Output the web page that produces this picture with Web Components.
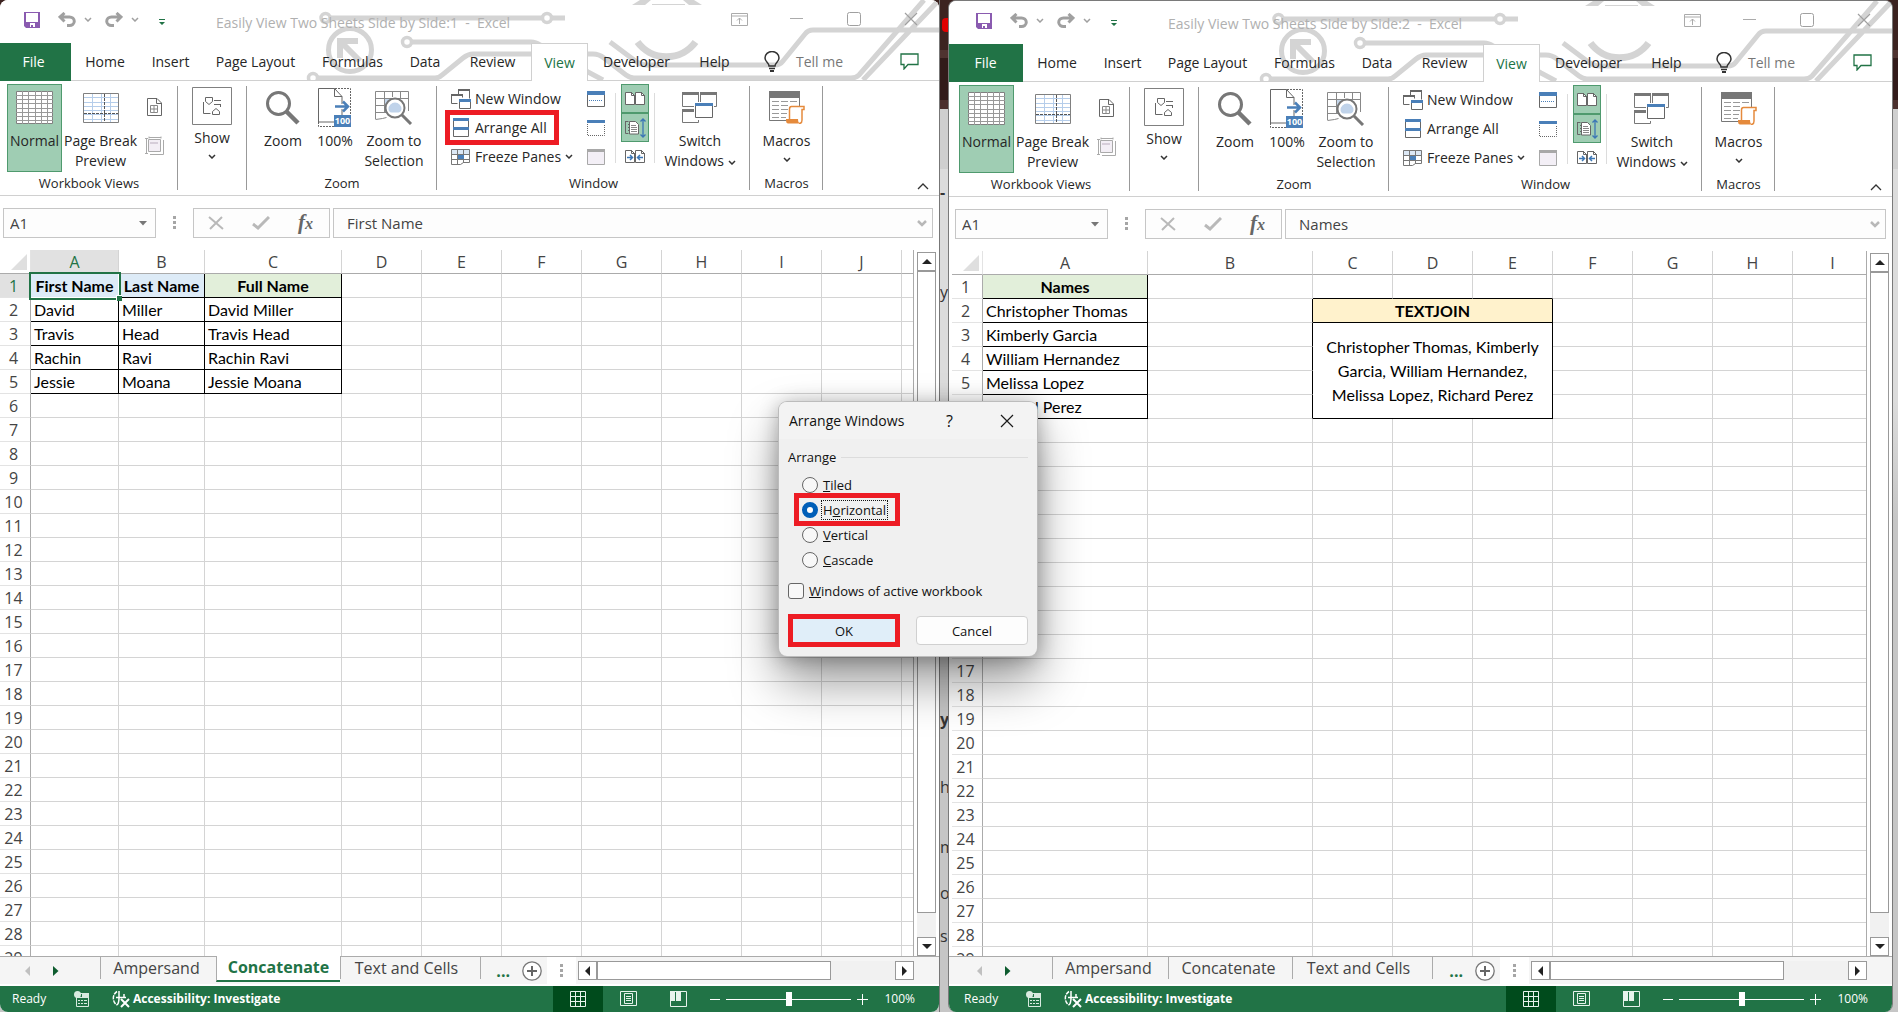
<!DOCTYPE html>
<html lang="en">
<head>
<meta charset="utf-8">
<title>Easily View Two Sheets Side by Side - Excel</title>
<style>
    html, body {
        margin: 0;
        height: 100%;
    }
    body {
        overflow: hidden;
        font-family: "Open Sans", "Noto Sans", sans-serif;
        font-size: 14px;
        color: #262626;
        background: #d2d2d2;
    }
</style>
</head>
<body>
<side-by-side>
    <excel-window slot="first" book="1"></excel-window>
    <excel-window slot="second" book="2"></excel-window>
    <arrange-dialog slot="dialog"></arrange-dialog>
</side-by-side>

<script>
// evenly spaced inner lines of a table-like icon
function rules(x, y, w, h, cols, rows, color) {
    let d = '';
    for (let i = 1; i < cols; i++) {
        d += `M${Math.round(x + i * w / cols) + 0.5} ${y}v${h}`;
    }
    for (let i = 1; i < rows; i++) {
        d += `M${x} ${Math.round(y + i * h / rows) + 0.5}h${w}`;
    }
    return `<path d="${d}" stroke="${color}" fill="none"/>`;
}

const PAGE = (x, y) => `<path d="M${x + 0.5} ${y + 0.5}h6l3 3v9h-9z" fill="#fff" stroke="#666"/><path d="M${x + 6.5} ${y}v3.5h3.5" fill="none" stroke="#666"/>`;

// name: [width, height, markup]
const ICONS = {
    save: [16, 16, `<path d="M0 0h16v16H2l-2-2z" fill="#8a5bb0"/><path d="M2 1h12v9H2zM4 11h8v4H4z" fill="#fff"/><path d="M4 11h2v4H4zM7 13h2v2H7zM11 11h1v4h-1z" fill="#8a5bb0"/>`],
    undo: [18, 15, `<path d="M3 5h8.500a4.500 4 0 0 1 0 8.500H9M6.500 1L2 5l4.500 4.500" fill="none" stroke="#a0a0a0" stroke-width="3"/>`],
    redo: [18, 15, `<path d="M15 5H6.500a4.500 4 0 0 0 0 8.500H9M11.500 1L16 5l-4.500 4.500" fill="none" stroke="#a0a0a0" stroke-width="3"/>`],
    chevronPale: [8, 5, `<path d="M1 1l3 3 3-3" fill="none" stroke="#a0a0a0" stroke-width="1.500"/>`],
    chevron: [8, 5, `<path d="M1 1l3 3 3-3" fill="none" stroke="#333" stroke-width="1.500"/>`],
    chevronBar: [10, 7, `<path d="M1 1l4 4 4-4" fill="none" stroke="#b8b8b8" stroke-width="2.500"/>`],
    collapse: [12, 7, `<path d="M1 6l5-5 5 5" fill="none" stroke="#333" stroke-width="1.300"/>`],
    customize: [6, 6, `<path d="M0 0h6v1H0zM0 3h6L3 6z" fill="#217346"/>`],
    display: [17, 13, `<path d="M.5.500h16v12H.5zM0 3h17M8.500 11V5M6 7.500L8.500 5 11 7.500" fill="none" stroke="#ababab"/>`],
    minimize: [13, 14, `<path d="M0 6.500h13" stroke="#ababab"/>`],
    maximize: [14, 14, `<rect x=".5" y=".5" width="13" height="13" rx="2" fill="none" stroke="#a0a0a0"/>`],
    close: [14, 14, `<path d="M1 1l12 12M13 1L1 13" stroke="#a0a0a0" stroke-width="1.200"/>`],
    closeDark: [14, 14, `<path d="M1 1l12 12M13 1L1 13" stroke="#1a1a1a" stroke-width="1.200"/>`],
    bulb: [16, 21, `<path d="M5 15c0-3-4-4-4-8a7 6.500 0 0 1 14 0c0 4-4 5-4 8zM5 17.500h6" fill="none" stroke="#333" stroke-width="1.500"/><path d="M6 20h4" stroke="#333" stroke-width="2"/>`],
    comment: [19, 17, `<path d="M1 1h17v10.500H8L4 16v-4.500H1z" fill="none" stroke="#217346" stroke-width="1.300"/>`],
    normal: [37, 33, `<path d="M.5.500h36v32H.5z" fill="#fff" stroke="#808080"/>${rules(0, 0, 37, 33, 6, 8, '#999')}`],
    pageBreak: [36, 30, `<path d="M.5.500h35v29H.5z" fill="#fff"/>${rules(0, 0, 36, 30, 4, 7, '#b5cdea')}<path d="M.5.500h35v29H.5z" fill="none" stroke="#808080"/><path d="M21.500 1v28M1 20.500h34" stroke="#555" stroke-dasharray="3 1"/>`],
    pageLayout: [15, 18, `<path d="M.5.500h9.500l4.500 4.500v12.500H.5zM9.500.500V5.500h5" fill="#fff" stroke="#666"/><path d="M3.500 7.500h7v7h-7zM7 7v8M3 11h8" fill="none" stroke="#888"/>`],
    customViews: [20, 19, `<path d="M4.500 3.500h12v12h-12z" fill="#f3eef5" stroke="#aaa"/><path d="M6 6h8v2H6z" fill="#d6cdd9"/><path d="M2.500 2v15M1 2.500h3M1 17.500h3M5 .5v2M17 .5v2M5 1.500h12M19.500 4v14.500H6" fill="none" stroke="#aaa"/>`],
    show: [40, 38, `<path d="M.5.500h39v37H.5z" fill="#fff" stroke="#808080"/><path d="M13.500 10.500h7v4l-3.500 3-3.500-3zM22 13.500h7M11.500 15v11.500h7M22 17.500h7M28.500 17v3" fill="none" stroke="#666"/><path d="M20.500 27.500v-3l3.500-3 3.500 3v3z" fill="#fff" stroke="#666"/>`],
    zoom: [34, 34, `<circle cx="12.500" cy="12.500" r="11" fill="#fff" stroke="#777" stroke-width="3"/><path d="M20.500 20.500L32 32" stroke="#777" stroke-width="4.500"/>`],
    hundred: [34, 39, `<path d="M17 .5h15.500V27M.5 34v4.500H16" fill="none" stroke="#666" stroke-dasharray="2 1"/><path d="M.5.500h16l7.500 8v25.500H.5z" fill="#fff" stroke="#666"/><path d="M16.500.500v8H24" fill="none" stroke="#666"/><path d="M16 16h16v5H16z" fill="#fff"/><path d="M17 18.500h13M25 13.500l5 5-5 5" fill="none" stroke="#4a7fb8" stroke-width="2.500"/><path d="M16 27h17v12H16z" fill="#4a7fb8"/><text x="24.500" y="36" fill="#fff" font-size="9" font-weight="700" text-anchor="middle">100</text>`],
    zoomSelection: [38, 34, `<path d="M.5.500h33v27H.5z" fill="#fff"/><path d="M9 7h17v14H9z" fill="#c5d7ec"/><path d="M.5 28V.5h33V20M9.500 0v22M17.500 0v6M25.500 0v8M0 7.500h34M0 14.500h11M0 21.500h11M.5 28.500l7-1 4-1" fill="none" stroke="#888"/><circle cx="20" cy="17" r="9.500" fill="#fff" stroke="#777" stroke-width="2"/><path d="M13.500 18a6.500 6.500 0 0 1 13 0c0 2-2 3.500-3 3.500h-7c-2 0-3-2-3-3.500z" fill="#c0d3ea"/><path d="M27 24l9 9" stroke="#777" stroke-width="3"/>`],
    newWindow: [20, 20, `<path d="M7.500 5V.5h11V9.500M.5 5.500h11v3M.5 5.500v9h6" fill="none" stroke="#666"/><path d="M7 0h12v2H7zM0 5h12v2H0z" fill="#666"/><path d="M8.500 11.500h11v8h-11z" fill="#fff" stroke="#666"/><path d="M8 10h12v3H8z" fill="#4a7fb8"/>`],
    arrange: [16, 19, `<path d="M.5.500h15v18H.5z" fill="#fff" stroke="#666"/><path d="M0 0h16v3H0zM0 9h16v3H0z" fill="#4a7fb8"/>`],
    freeze: [20, 16, `<path d="M.5.500h18v13l-3 1-3-1-2 2H.5z" fill="#fff"/><path d="M0 0h19v5H0z" fill="#dce8f5"/><path d="M.5 15.500V.5h18v13l-6 0-3 2zM6.500 0v15M12.500 0v14M0 5.500h19M0 10.500h19" fill="none" stroke="#777"/><path d="M7 6h6v4H7z" fill="#4a7fb8"/>`],
    split: [18, 16, `<path d="M.5.500h17v15H.5z" fill="#fff" stroke="#666"/><path d="M0 0h18v4H0z" fill="#4a7fb8"/><path d="M2 9.500h14" stroke="#4a7fb8" stroke-dasharray="1 1"/>`],
    hide: [18, 16, `<path d="M.5 4v11.500h17V4" fill="none" stroke="#666" stroke-dasharray="1 1"/><path d="M0 0h18v3H0z" fill="#4a7fb8"/>`],
    unhide: [18, 16, `<path d="M.5.500h17v15H.5z" fill="#f3eff6" stroke="#a8a8a8"/><path d="M0 0h18v3H0z" fill="#a8a8a8"/>`],
    sideBySide: [20, 15, PAGE(0, 1) + PAGE(10, 1)],
    syncScroll: [21, 20, `<path d="M.5 3.500h3M.5 3v12.500h3M3 6.500h1M3 9.500h1M3 12.500h1" fill="none" stroke="#666"/><path d="M4.500 3.500h6l3 3v9.500h-9z" fill="#fff" stroke="#666"/><path d="M6 7.500h5M6 9.500h6M6 11.500h6M6 13.500h6" stroke="#888"/><path d="M18 1v18M15.500 3.500L18 1l2.500 2.500M15.500 16.500L18 19l2.500-2.500" fill="none" stroke="#3b76b5" stroke-width="1.300"/>`],
    resetWindow: [20, 15, PAGE(0, 1) + PAGE(10, 1) + `<path d="M2 8.500h5M5 6l2.500 2.500L5 11M18 8.500h-5M15 6l-2.500 2.500L15 11" fill="none" stroke="#3b76b5" stroke-width="1.500"/>`],
    switchWindows: [36, 32, `<path d="M.5.500h16v14H.5zM18.500.500h16v14h-16zM.5 17.500h16v13H.5z" fill="#fff" stroke="#777"/><path d="M0 0h17v3H0zM18 0h17v3H18zM0 17h12v3H0z" fill="#777"/><path d="M12 10h20v18H12z" fill="#fff"/><path d="M13.500 11.500h17v14h-17z" fill="#fff" stroke="#666"/><path d="M13 11h18v3H13z" fill="#4a7fb8"/>`],
    macros: [36, 33, `<path d="M.5.500h30v29H.5z" fill="#fff" stroke="#777"/><path d="M0 0h31v7H0z" fill="#777"/><path d="M3 10.500h7M12 10.500h7M21 10.500h7M3 14.500h7M12 14.500h7M3 18.500h7M12 18.500h7M3 22.500h7M12 22.500h6M3 26.500h7M12 26.500h5" stroke="#999"/><path d="M21 16h14v3h-2v14H21z" fill="#fff"/><path d="M20.500 28V18c0-2 1-2.500 2-2.500h12.500v3h-2V29c0 3-2 3.500-3 3.500" fill="#fff" stroke="#e58a3c" stroke-width="1.500"/><path d="M17 28h12c0 3 1 4 2 4.500H19c-2 0-2-3-2-4.500z" fill="#e58a3c"/>`],
    cancel: [16, 14, `<path d="M1 1l14 12M14 1L2 13" stroke="#b9b9b9" stroke-width="2"/>`],
    enter: [18, 14, `<path d="M1 8l5 4L17 1" fill="none" stroke="#b9b9b9" stroke-width="3"/>`],
    drop: [8, 5, `<path d="M0 0h8L4 4.500z" fill="#777"/>`],
    grip: [3, 14, `<path d="M0 0h3v3H0zM0 5h3v3H0zM0 10h3v3H0z" fill="#a6a6a6"/>`],
    up: [10, 5, `<path d="M0 5h10L5 0z" fill="#222"/>`],
    down: [10, 5, `<path d="M0 0h10L5 5z" fill="#222"/>`],
    left: [5, 10, `<path d="M5 0v10L0 5z" fill="#222"/>`],
    right: [5, 10, `<path d="M0 0v10l5-5z" fill="#222"/>`],
    prevSheet: [5, 10, `<path d="M5 0v10L0 5z" fill="#c0c0c0"/>`],
    nextSheet: [6, 10, `<path d="M0 0v10l5.500-5z" fill="#0e5c2f"/>`],
    addSheet: [20, 20, `<circle cx="10" cy="10" r="9.200" fill="#fff" stroke="#777" stroke-width="1.300"/><path d="M5 10h10M10 5v10" stroke="#666" stroke-width="2"/>`],
    record: [15, 16, `<path d="M2.500 2.500h12v13h-12zM2 6.500h13" fill="none" stroke="#d8ebe0"/><path d="M4 9.500h2M7 9.500h2M10 9.500h3M4 12.500h2M7 12.500h2M10 12.500h3" stroke="#d8ebe0"/><path d="M8 2h7v4H8z" fill="#d8ebe0"/><circle cx="3.500" cy="3.500" r="3.500" fill="#d8ebe0"/>`],
    access: [19, 18, `<path d="M6 1.500A8 8 0 0 0 6 15" fill="none" stroke="#fff" stroke-width="1.500" stroke-dasharray="4 1"/><path d="M8 1v6M5 7.500h10M13 4v3.500M8 8c0 3 0 5-2 7" fill="none" stroke="#fff" stroke-width="1.500"/><path d="M10 9l8 8M18 9l-8 8" stroke="#fff" stroke-width="2"/>`],
    viewNormal: [17, 17, `<path d="M.5.500h15v15H.5zM5.500 0v16M10.500 0v16M0 5.500h16M0 10.500h16" fill="none" stroke="#e7f3ec"/>`],
    viewLayout: [17, 16, `<path d="M.5.500h16v14H.5zM4.500 2.500h8v10h-8zM6 5.500h5M6 7.500h5M6 9.500h5" fill="none" stroke="#e7f3ec"/>`],
    viewBreak: [17, 16, `<path d="M.5.500h16v15H.5z" fill="none" stroke="#e7f3ec"/><path d="M0 0h5v10H0zM6 0h5v10H6z" fill="#e7f3ec"/>`],
    minus: [11, 11, `<path d="M0 5.500h10" stroke="#fff"/>`],
    plus: [11, 11, `<path d="M0 5.500h11M5.500 0v11" stroke="#fff"/>`],
    corner: [16, 16, `<path d="M16 0v16H0z" fill="#dfdfdf"/>`]
};

const BOOKS = {
    1: {
        active: true,
        value: 'First Name',
        columns: [88, 86, 137, 80, 80, 80, 80, 80, 80, 80, 80],
        sheet: 'Concatenate',
        cells: {
            A1: ['First Name', 'data head blue current'], B1: ['Last Name', 'data head blue'], C1: ['Full Name', 'data head green'],
            A2: ['David', 'data'], B2: ['Miller', 'data'], C2: ['David Miller', 'data'],
            A3: ['Travis', 'data'], B3: ['Head', 'data'], C3: ['Travis Head', 'data'],
            A4: ['Rachin', 'data'], B4: ['Ravi', 'data'], C4: ['Rachin Ravi', 'data'],
            A5: ['Jessie', 'data'], B5: ['Moana', 'data'], C5: ['Jessie Moana', 'data']
        }
    },
    2: {
        active: false,
        value: 'Names',
        columns: [165, 165, 80, 80, 80, 80, 80, 80, 80],
        sheet: '',
        cells: {
            A1: ['Names', 'data head green'],
            A2: ['Christopher Thomas', 'data'],
            A3: ['Kimberly Garcia', 'data'],
            A4: ['William Hernandez', 'data'],
            A5: ['Melissa Lopez', 'data'],
            A6: ['Richard Perez', 'data'],
            B2: ['', 'edge-right'], B3: ['', 'edge-right'], B4: ['', 'edge-right'], B5: ['', 'edge-right'], B6: ['', 'edge-right'],
            C1: ['', 'edge-bottom'], D1: ['', 'edge-bottom'], E1: ['', 'edge-bottom'],
            C2: ['TEXTJOIN', 'data head yellow', 3, 1],
            C3: ['Christopher Thomas, Kimberly Garcia, William Hernandez, Melissa Lopez, Richard Perez', 'data wrap', 3, 4]
        }
    }
};

const RESET = `
    :host, *, *::before { box-sizing: border-box; }
    button, input {
        margin: 0;
        padding: 0;
        border: 0;
        background: none;
        font: inherit;
        color: inherit;
    }
`;

class XlIcon extends HTMLElement {
    constructor() {
        super();
        this.attachShadow({mode: 'open'});
    }

    connectedCallback() {
        const [w, h, markup] = ICONS[this.getAttribute('name')];
        this.shadowRoot.innerHTML = `
            <style>
                :host { display: block; flex: none; }
                svg { display: block; }
            </style>
            <svg width="${w}" height="${h}" viewBox="0 0 ${w} ${h}" aria-hidden="true">${markup}</svg>
        `;
    }
}

class WindowHeader extends HTMLElement {
    constructor() {
        super();
        this.attachShadow({mode: 'open'});
    }

    connectedCallback() {
        const tabs = ['Home', 'Insert', 'Page Layout', 'Formulas', 'Data', 'Review', 'View', 'Developer', 'Help'];
        this.shadowRoot.innerHTML = `
            <style>
                ${RESET}
                :host { display: block; position: relative; background: #fff; }
                /* circuit pattern behind the caption and the tabs */
                .art { position: absolute; top: 0; right: 0; }
                .title, nav { position: relative; display: flex; align-items: center; padding-left: var(--edge); }
                .title { height: 43px; }
                .quick { display: flex; align-items: center; width: 216px; padding: 0 0 4px 24px; }
                .quick .undo { margin: 0 8px 0 18px; }
                .quick .redo { margin: 0 8px 0 13px; }
                .quick .custom { margin: 4px 0 0 20px; }
                h1 { flex: 1; margin: 0; padding-top: 2px; font-size: 14px; line-height: 20px; font-weight: 400; color: #b0b0b0; white-space: pre; overflow: hidden; }
                .caption button { display: grid; place-items: center; width: 57px; height: 38px; }
                .caption { display: flex; align-self: flex-start; }
                nav { height: 38px; border-bottom: 1px solid #d0d0d0; align-items: stretch; }
                .tabs { display: grid; grid-template-columns: 71px 68px 63px 107px 87px 58px 77px 57px 97px 59px; }
                .tabs button { white-space: nowrap; text-align: center; line-height: 36px; }
                .tabs .file { margin-left: calc(var(--edge) * -1); padding: 0 4px 0 var(--edge); background: #217346; color: #fff; }
                .tabs .on { height: 38px; border: 1px solid #d0d0d0; border-bottom: 0; background: #fff; color: #217346; }
                .tell { display: flex; align-items: center; gap: 16px; margin-left: 20px; color: #777; }
                .comment { margin: 0 20px 0 auto; }
            </style>
            <svg class="art" width="639" height="80" viewBox="300 0 639 80" fill="none" stroke="#d4d4d4" stroke-width="5" aria-hidden="true">
                <circle cx="325.500" cy="18" r="4.500" stroke-width="3.500"/>
                <path d="M330 18h212M552 18h13"/>
                <circle cx="547" cy="18" r="4.500" stroke-width="3.500"/>
                <circle cx="350" cy="50" r="21.500"/>
                <path d="M358 41h-18v17M340 41l20 20" stroke-width="6"/>
                <circle cx="407" cy="42" r="4.500" stroke-width="3.500"/>
                <path d="M412 42h119q5 0 9 3l48 27 15 8"/>
                <circle cx="313" cy="78" r="4.500" stroke-width="3.500"/>
                <path d="M318 78h117q4 0 7-3l21-17q5-4 10-4h120q6 0 11 4l22 17q4 3 8 3h217q5 0 8-3l65-75"/>
                <path d="M610 42l24 18q6 5 13 5h128q5 0 8-4l22-27q3-4 8-4h126M863 80l76-80"/>
                <path d="M637.500 42a36 36 0 0 0 58 0" stroke-width="7"/>
                <path d="M652 4.500h33" stroke-width="1"/>
                <path d="M632 5l8-5h11l-6 5zM689 5l-6-5h11l8 5z" fill="#d4d4d4" stroke="none"/>
            </svg>
            <div class="title">
                <div class="quick">
                    <button aria-label="Save"><xl-icon name="save"></xl-icon></button>
                    <button class="undo" aria-label="Undo"><xl-icon name="undo"></xl-icon></button>
                    <xl-icon name="chevronPale"></xl-icon>
                    <button class="redo" aria-label="Redo"><xl-icon name="redo"></xl-icon></button>
                    <xl-icon name="chevronPale"></xl-icon>
                    <button class="custom" aria-label="Customize"><xl-icon name="customize"></xl-icon></button>
                </div>
                <h1>Easily View Two Sheets Side by Side:${this.getAttribute('book')}  -  Excel</h1>
                <div class="caption">
                    <button aria-label="Ribbon display options"><xl-icon name="display"></xl-icon></button>
                    <button aria-label="Minimize"><xl-icon name="minimize"></xl-icon></button>
                    <button aria-label="Maximize"><xl-icon name="maximize"></xl-icon></button>
                    <button aria-label="Close"><xl-icon name="close"></xl-icon></button>
                </div>
            </div>
            <nav>
                <div class="tabs">
                    <button class="file">File</button>
                    ${tabs.map(t => `<button${t === 'View' ? ' class="on"' : ''}>${t}</button>`).join('')}
                </div>
                <button class="tell"><xl-icon name="bulb"></xl-icon>Tell me</button>
                <button class="comment" aria-label="Comments"><xl-icon name="comment"></xl-icon></button>
            </nav>
        `;
    }
}

class RibbonGroup extends HTMLElement {
    constructor() {
        super();
        this.attachShadow({mode: 'open'});
        this.shadowRoot.innerHTML = `
            <style>
                :host { display: flex; flex-direction: column; flex: none; box-sizing: border-box; position: relative; padding: 3px 0 4px; }
                .body { display: flex; flex: 1; }
                .label { text-align: center; font-size: 13px; line-height: 16px; min-height: 16px; }
                .rule { position: absolute; right: 0; top: 5px; bottom: 5px; width: 1px; background: #999; }
            </style>
            <div class="body"><slot></slot></div>
            <div class="label"></div>
            <div class="rule"></div>
        `;
    }

    connectedCallback() {
        this.shadowRoot.querySelector('.label').textContent = this.getAttribute('label') || '';
    }
}

class RibbonButton extends HTMLElement {
    constructor() {
        super();
        this.attachShadow({mode: 'open'});
    }

    connectedCallback() {
        this.shadowRoot.innerHTML = `
            <style>
                ${RESET}
                :host { display: block; flex: none; }
                button { display: flex; flex-direction: column; align-items: center; width: 100%; height: 88px; line-height: 20px; white-space: nowrap; }
                .icon { display: grid; place-items: center; height: 47px; }
                .drop { margin-top: 6px; }
                :host([pressed]) button { background: #9fcdb3; box-shadow: inset 0 0 0 1px #4f9a6e; }
                :host([framed]) .icon { height: 44px; }
            </style>
            <button>
                <span class="icon"><xl-icon name="${this.getAttribute('icon')}"></xl-icon></span>
                <span><slot></slot></span>
                ${this.hasAttribute('drop') ? '<xl-icon class="drop" name="chevron"></xl-icon>' : ''}
            </button>
        `;
    }
}

class RibbonPanel extends HTMLElement {
    constructor() {
        super();
        this.attachShadow({mode: 'open'});
    }

    connectedCallback() {
        this.shadowRoot.innerHTML = `
            <style>
                ${RESET}
                :host { display: flex; height: 115px; padding-left: var(--edge); border-bottom: 1px solid #d0d0d0; background: #fff; }
                .views { width: 178px; }
                .show { width: 69px; }
                .zoom { width: 190px; }
                .window { width: 313px; }
                .macros { width: 73px; }
                .icons { display: flex; flex-direction: column; align-items: center; width: 30px; gap: 20px; padding-top: 14px; }
                .list { display: flex; flex-direction: column; align-items: flex-start; gap: 4px; width: 136px; padding-top: 2px; }
                .list button { display: flex; align-items: center; height: 25px; gap: 3px; padding-right: 7px; white-space: nowrap; }
                .list .glyph { display: grid; place-items: center; width: 22px; }
                .list .drop { margin-left: 1px; }
                :host([marked]) .arrange { outline: 5px solid #ed1c24; }
                .panes { display: grid; grid-template-rows: repeat(3, 29px); place-items: center; width: 20px; }
                .sync { display: grid; grid-template-rows: repeat(3, 29px); width: 28px; }
                .sync button { display: grid; place-items: center; }
                .sync .on { background: #9fcdb3; box-shadow: inset 0 0 0 1px #4f9a6e; }
                .thin { width: 1px; height: 70px; margin: 9px 5px 0; background: #dcdcdc; }
                .thin.first { margin-left: 9px; }
                .collapse { margin: auto 10px 5px auto; }
            </style>
            <ribbon-group class="views" label="Workbook Views">
                <ribbon-button icon="normal" pressed style="width: 55px; margin-left: 7px">Normal</ribbon-button>
                <ribbon-button icon="pageBreak" style="width: 77px">Page Break<br>Preview</ribbon-button>
                <div class="icons">
                    <button aria-label="Page Layout"><xl-icon name="pageLayout"></xl-icon></button>
                    <button aria-label="Custom Views"><xl-icon name="customViews"></xl-icon></button>
                </div>
            </ribbon-group>
            <ribbon-group class="show">
                <ribbon-button icon="show" framed drop style="width: 68px">Show</ribbon-button>
            </ribbon-group>
            <ribbon-group class="zoom" label="Zoom">
                <ribbon-button icon="zoom" style="width: 60px; margin-left: 6px">Zoom</ribbon-button>
                <ribbon-button icon="hundred" style="width: 44px">100%</ribbon-button>
                <ribbon-button icon="zoomSelection" style="width: 74px">Zoom to<br>Selection</ribbon-button>
            </ribbon-group>
            <ribbon-group class="window" label="Window">
                <div class="list" style="margin-left: 13px">
                    <button><span class="glyph"><xl-icon name="newWindow"></xl-icon></span>New Window</button>
                    <button class="arrange"><span class="glyph"><xl-icon name="arrange"></xl-icon></span>Arrange All</button>
                    <button><span class="glyph"><xl-icon name="freeze"></xl-icon></span>Freeze Panes<xl-icon class="drop" name="chevron"></xl-icon></button>
                </div>
                <div class="panes">
                    <button aria-label="Split"><xl-icon name="split"></xl-icon></button>
                    <button aria-label="Hide"><xl-icon name="hide"></xl-icon></button>
                    <button aria-label="Unhide"><xl-icon name="unhide"></xl-icon></button>
                </div>
                <div class="thin first"></div>
                <div class="sync">
                    <button class="on" aria-label="View Side by Side"><xl-icon name="sideBySide"></xl-icon></button>
                    <button class="on" aria-label="Synchronous Scrolling"><xl-icon name="syncScroll"></xl-icon></button>
                    <button aria-label="Reset Window Position"><xl-icon name="resetWindow"></xl-icon></button>
                </div>
                <div class="thin"></div>
                <ribbon-button icon="switchWindows" style="width: 80px">Switch<br>Windows <xl-icon name="chevron" style="display: inline-block; vertical-align: middle"></xl-icon></ribbon-button>
            </ribbon-group>
            <ribbon-group class="macros" label="Macros">
                <ribbon-button icon="macros" drop style="width: 73px">Macros</ribbon-button>
            </ribbon-group>
            <button class="collapse" aria-label="Collapse the ribbon"><xl-icon name="collapse"></xl-icon></button>
        `;
    }
}

class FormulaBar extends HTMLElement {
    constructor() {
        super();
        this.attachShadow({mode: 'open'});
    }

    connectedCallback() {
        this.shadowRoot.innerHTML = `
            <style>
                ${RESET}
                :host { display: flex; height: 54px; padding: 12px 6px 12px calc(3px + var(--edge)); background: #fff; font-size: 15px; color: #444; }
                .box { display: flex; align-items: center; border: 1px solid #c6c6c6; background: #fdfdfd; }
                .name { width: 153px; padding: 0 8px 0 6px; }
                .grip { align-self: center; margin: 0 17px; }
                .tools { width: 137px; margin-right: 3px; justify-content: space-between; padding: 0 16px 0 14px; }
                .fx { font: italic 700 21px/26px "Liberation Serif", serif; color: #666; }
                .fx small { font-size: 16px; }
                .value { flex: 1; min-width: 0; padding: 0 5px 0 13px; }
                input { flex: 1; min-width: 0; width: 100%; }
            </style>
            <div class="box name">
                <input aria-label="Name box" value="A1">
                <button aria-label="Names"><xl-icon name="drop"></xl-icon></button>
            </div>
            <xl-icon class="grip" name="grip"></xl-icon>
            <div class="box tools">
                <button aria-label="Cancel"><xl-icon name="cancel"></xl-icon></button>
                <button aria-label="Enter"><xl-icon name="enter"></xl-icon></button>
                <button class="fx" aria-label="Insert function">f<small>x</small></button>
            </div>
            <div class="box value">
                <input aria-label="Formula" value="${this.getAttribute('value')}">
                <button aria-label="Expand formula bar"><xl-icon name="chevronBar"></xl-icon></button>
            </div>
        `;
    }
}

class SheetGrid extends HTMLElement {
    constructor() {
        super();
        this.attachShadow({mode: 'open'});
    }

    connectedCallback() {
        const book = BOOKS[this.getAttribute('book')];
        const letters = book.columns.map((w, i) => String.fromCharCode(65 + i));
        this.shadowRoot.innerHTML = `
            <style>
                ${RESET}
                :host { display: block; overflow: hidden; min-width: 0; padding-left: var(--edge); border-right: 1px solid #ababab; background: #fff; }
                table { table-layout: fixed; width: 1px; border-collapse: separate; border-spacing: 0; }
                tr { height: 24px; }
                th, td { padding: 0; height: 24px; white-space: nowrap; overflow: visible; }
                th { font-size: 16px; line-height: 20px; font-weight: 400; color: #444; text-align: center; }
                thead th { border-right: 1px solid #d4d4d4; border-bottom: 1px solid #ababab; }
                tbody th { padding-right: 3px; border-right: 1px solid #ababab; border-bottom: 1px solid #e3e3e3; }
                th.on { background: #e1e1e1; color: #217346; }
                thead th.corner { border-right-color: #e3e3e3; }
                .corner xl-icon { margin-left: 11px; }
                td { border-right: 1px solid #d4d4d4; border-bottom: 1px solid #d4d4d4; font: 16px/20px Lato, "Open Sans", sans-serif; color: #000; }
                .data { padding-left: 3px; border-color: #000; }
                .edge-right { border-right-color: #000; }
                .edge-bottom { border-bottom-color: #000; }
                .head { padding: 0; font-weight: 700; text-align: center; }
                .blue { background: #ddebf7; }
                .green { background: #e2efda; }
                .yellow { background: #fff2cc; }
                .wrap { padding: 0 6px; white-space: normal; text-align: center; line-height: 24px; }
                .current { outline: 2px solid #217346; position: relative; border-color: #fff; }
                /* fill handle */
                .current::before { content: ""; position: absolute; right: -4px; bottom: -4px; width: 6px; height: 6px; background: #217346; border: 1px solid #fff; border-width: 1px 0 0 1px; }
            </style>
            <table>
                <colgroup><col style="width: 31px">${book.columns.map(w => `<col style="width: ${w}px">`).join('')}</colgroup>
                <thead><tr><th class="corner"><xl-icon name="corner"></xl-icon></th>${letters.map(l => `<th class="${book.active && l === 'A' ? 'on' : ''}">${l}</th>`).join('')}</tr></thead>
                <tbody></tbody>
            </table>
        `;
        const body = this.shadowRoot.querySelector('tbody');
        const covered = new Set();
        for (let r = 1; r <= 29; r++) {
            const row = body.insertRow();
            const head = document.createElement('th');
            head.textContent = r;
            if (book.active && r === 1) head.className = 'on';
            row.append(head);
            letters.forEach((l, i) => {
                if (covered.has(l + r)) return;
                const cell = row.insertCell();
                const [text, cls, across = 1, down = 1] = book.cells[l + r] || ['', ''];
                cell.textContent = text;
                cell.className = cls;
                cell.colSpan = across;
                cell.rowSpan = down;
                for (let y = 0; y < down; y++) {
                    for (let x = 0; x < across; x++) covered.add(letters[i + x] + (r + y));
                }
            });
        }
    }
}

class ScrollBar extends HTMLElement {
    constructor() {
        super();
        this.attachShadow({mode: 'open'});
    }

    connectedCallback() {
        const upright = this.hasAttribute('vertical');
        this.shadowRoot.innerHTML = `
            <style>
                ${RESET}
                :host { display: flex; flex: none; width: 336px; height: 19px; background: #f1f1f1; }
                :host([vertical]) { flex-direction: column; width: 19px; height: auto; }
                button { display: grid; place-items: center; flex: none; width: 19px; height: 19px; border: 1px solid #999; background: #fff; }
                .thumb { border: 1px solid #999; background: #fff; flex: 234; }
                .rest { flex: 64; }
                :host([vertical]) .thumb { flex: 643; }
                :host([vertical]) .rest { flex: 24; }
            </style>
            <button aria-label="Back"><xl-icon name="${upright ? 'up' : 'left'}"></xl-icon></button>
            <div class="thumb"></div>
            <div class="rest"></div>
            <button aria-label="Forward"><xl-icon name="${upright ? 'down' : 'right'}"></xl-icon></button>
        `;
    }
}

class SheetTabs extends HTMLElement {
    constructor() {
        super();
        this.attachShadow({mode: 'open'});
    }

    connectedCallback() {
        const active = this.getAttribute('active');
        const sheets = ['Ampersand', 'Concatenate', 'Text and Cells'];
        this.shadowRoot.innerHTML = `
            <style>
                ${RESET}
                :host { display: flex; height: 30px; padding: 0 25px 0 var(--edge); border-top: 1px solid #ababab; border-bottom: 2px solid #fff; background: #f5f5f5; }
                .nav { display: flex; align-items: center; gap: 23px; width: 100px; padding-left: 25px; }
                .tabs { display: grid; grid-template-columns: 116px 124px 141px; align-items: start; }
                .tabs button { height: 22px; line-height: 20px; padding: 0 4px 0 0; font-size: 16px; color: #444; border-left: 1px solid #ababab; white-space: nowrap; }
                .tabs button:last-child { border-right: 1px solid #ababab; padding-right: 8px; }
                .tabs .on { height: 26px; margin-top: -1px; padding: 0; padding-bottom: 2px; border-bottom: 2px solid #217346; background: #fff; color: #217346; font-weight: 700; }
                .more { margin-left: auto; font-size: 16px; font-weight: 700; color: #217346; }
                .add { margin: 0 5px 0 12px; }
                .grip { display: grid; place-items: center; width: 29px; margin-right: 2px; background: #fff; }
                scroll-bar { align-self: center; }
            </style>
            <div class="nav">
                <button aria-label="Previous sheet"><xl-icon name="prevSheet"></xl-icon></button>
                <button aria-label="Next sheet"><xl-icon name="nextSheet"></xl-icon></button>
            </div>
            <div class="tabs">
                ${sheets.map(s => `<button${s === active ? ' class="on"' : ''}>${s}</button>`).join('')}
            </div>
            <button class="more">...</button>
            <button class="add" aria-label="New sheet"><xl-icon name="addSheet"></xl-icon></button>
            <div class="grip"><xl-icon name="grip"></xl-icon></div>
            <scroll-bar></scroll-bar>
        `;
    }
}

class StatusBar extends HTMLElement {
    constructor() {
        super();
        this.attachShadow({mode: 'open'});
        this.shadowRoot.innerHTML = `
            <style>
                ${RESET}
                :host { display: flex; align-items: center; height: 26px; padding: 0 24px 0 calc(12px + var(--edge)); background: #217346; color: #fff; font-size: 12px; line-height: 16px; }
                .ready { width: 62px; }
                .check { display: flex; align-items: center; gap: 3px; margin-left: 22px; font-weight: 700; white-space: nowrap; }
                .views { display: flex; align-self: stretch; margin-left: auto; }
                .views button { display: grid; place-items: center; width: 50px; }
                .views .on { background: #004b1c; }
                .out { margin: 0 5px 0 7px; }
                .in { margin: 0 16px 0 6px; }
                input { appearance: none; width: 125px; height: 14px; background: linear-gradient(#fff, #fff) center / 100% 1px no-repeat; }
                input::-webkit-slider-thumb { appearance: none; width: 6px; height: 14px; background: #fff; }
            </style>
            <span class="ready">Ready</span>
            <button aria-label="Record macro"><xl-icon name="record"></xl-icon></button>
            <button class="check"><xl-icon name="access"></xl-icon>Accessibility: Investigate</button>
            <div class="views">
                <button class="on" aria-label="Normal"><xl-icon name="viewNormal"></xl-icon></button>
                <button aria-label="Page Layout"><xl-icon name="viewLayout"></xl-icon></button>
                <button aria-label="Page Break Preview"><xl-icon name="viewBreak"></xl-icon></button>
            </div>
            <button class="out" aria-label="Zoom out"><xl-icon name="minus"></xl-icon></button>
            <input type="range" aria-label="Zoom" min="0" max="200" value="100">
            <button class="in" aria-label="Zoom in"><xl-icon name="plus"></xl-icon></button>
            <span>100%</span>
        `;
    }
}

class ExcelWindow extends HTMLElement {
    constructor() {
        super();
        this.attachShadow({mode: 'open'});
    }

    connectedCallback() {
        const id = this.getAttribute('book');
        const book = BOOKS[id];
        this.shadowRoot.innerHTML = `
            <style>
                :host { --edge: 0px; display: flex; flex-direction: column; height: 100%; overflow: hidden; box-sizing: border-box; background: #fff; border-radius: 8px; }
                :host([book="2"]) { --edge: 3px; border: 1px solid #7a7a7a; border-bottom: 0; }
                window-header, ribbon-panel, formula-bar, sheet-tabs, status-bar { flex: none; }
                .main { display: flex; flex: 1; min-height: 0; }
                sheet-grid { flex: 1; }
                scroll-bar { margin: 2px 3px 0; }
            </style>
            <window-header book="${id}"></window-header>
            <ribbon-panel${book.active ? ' marked' : ''}></ribbon-panel>
            <formula-bar value="${book.value}"></formula-bar>
            <div class="main">
                <sheet-grid book="${id}"></sheet-grid>
                <scroll-bar vertical></scroll-bar>
            </div>
            <sheet-tabs active="${book.sheet}"></sheet-tabs>
            <status-bar></status-bar>
        `;
    }
}

class ArrangeDialog extends HTMLElement {
    constructor() {
        super();
        this.attachShadow({mode: 'open'});
        this.shadowRoot.innerHTML = `
            <style>
                ${RESET}
                :host { display: block; width: 258px; border-radius: 8px; overflow: hidden; background: #f0f0f0; color: #111; font-size: 13px; line-height: 18px;
                    box-shadow: 0 0 0 1px #bcbcbc, 0 2px 20px rgba(0, 0, 0, .3), 0 26px 50px rgba(0, 0, 0, .4); }
                header { display: flex; align-items: center; height: 37px; padding: 0 23px 0 10px; background: #f3f3f3; font-size: 14px; }
                header .help { margin: 0 47px 0 auto; font-size: 16px; }
                form { padding: 9px; }
                fieldset { margin: 0; padding: 0; border: 0; }
                legend { display: flex; align-items: center; gap: 5px; width: 100%; padding: 0; }
                legend::after { content: ""; flex: 1; height: 1px; background: #dcdcdc; }
                .choices { display: grid; gap: 2px; justify-items: start; padding: 7px 0 11px 11px; }
                .choices label { display: flex; align-items: center; gap: 3px; width: 96px; height: 23px; padding-left: 3px; }
                .choices span { padding: 0 1px; border: 1px solid transparent; }
                .choices .marked { outline: 5px solid #ed1c24; position: relative; }
                .marked span { border: 1px dotted #111; }
                input { appearance: none; flex: none; width: 16px; height: 16px; border: 1px solid #666; background: #f8f8f8; }
                input[type=radio] { border-radius: 50%; }
                input[type=radio]:checked { border: 5px solid #005fb8; background: #fff; }
                input[type=checkbox] { border-radius: 3px; }
                .check { display: flex; align-items: center; gap: 5px; }
                footer { display: flex; justify-content: space-between; align-items: center; margin-top: 14px; }
                footer button { width: 112px; height: 29px; border: 1px solid #d0d0d0; border-radius: 4px; background: #fdfdfd; }
                footer .ok { height: 33px; border: 5px solid #ed1c24; border-radius: 0; background: #e0eef9; }
            </style>
            <header>
                <span>Arrange Windows</span>
                <button class="help" aria-label="Help">?</button>
                <button aria-label="Close"><xl-icon name="closeDark"></xl-icon></button>
            </header>
            <form>
                <fieldset>
                    <legend>Arrange</legend>
                    <div class="choices">
                        <label><input type="radio" name="arrange"><span><u>T</u>iled</span></label>
                        <label class="marked"><input type="radio" name="arrange" checked><span>H<u>o</u>rizontal</span></label>
                        <label><input type="radio" name="arrange"><span><u>V</u>ertical</span></label>
                        <label><input type="radio" name="arrange"><span><u>C</u>ascade</span></label>
                    </div>
                </fieldset>
                <label class="check"><input type="checkbox"><span><u>W</u>indows of active workbook</span></label>
                <footer>
                    <button type="button" class="ok">OK</button>
                    <button type="button">Cancel</button>
                </footer>
            </form>
        `;
    }
}

class SideBySide extends HTMLElement {
    constructor() {
        super();
        this.attachShadow({mode: 'open'});
        this.shadowRoot.innerHTML = `
            <style>
                :host {
                    display: grid;
                    grid-template-columns: minmax(0, 939fr) 9px minmax(0, 945fr) 5px;
                    height: 100vh;
                    overflow: hidden;
                    background: linear-gradient(#3c2320 50px, #4f3330 50px 58px, #321b1a 58px 100px, #4c302e 100px 109px, #cfcfcf 109px 169px, #dcdcdc 169px 400px, #c6c6c6 520px);
                }
                /* strip of the page left open between the windows */
                .behind { display: grid; grid-template-rows: 50px 152px 100px 427px 68px 60px 46px 43px; align-content: start; align-items: end; overflow: hidden; border-left: 1px solid #777; color: #333; font-size: 16px; line-height: 20px; }
                .behind i { width: 6px; height: 14px; margin: 0 0 18px 2px; border-radius: 4px 0 0 4px; background: #e00000; }
                ::slotted([slot=dialog]) { position: absolute; left: calc(50% - 170px); top: 402px; }
            </style>
            <slot name="first"></slot>
            <div class="behind">
                <i></i><b>-</b><span>y-</span><b>ye</b><span>h</span><span>m</span><span>on</span><span>s</span>
            </div>
            <slot name="second"></slot>
            <slot name="dialog"></slot>
        `;
    }
}

customElements.define('xl-icon', XlIcon);
customElements.define('window-header', WindowHeader);
customElements.define('ribbon-group', RibbonGroup);
customElements.define('ribbon-button', RibbonButton);
customElements.define('ribbon-panel', RibbonPanel);
customElements.define('formula-bar', FormulaBar);
customElements.define('sheet-grid', SheetGrid);
customElements.define('scroll-bar', ScrollBar);
customElements.define('sheet-tabs', SheetTabs);
customElements.define('status-bar', StatusBar);
customElements.define('excel-window', ExcelWindow);
customElements.define('arrange-dialog', ArrangeDialog);
customElements.define('side-by-side', SideBySide);
</script>
</body>
</html>
